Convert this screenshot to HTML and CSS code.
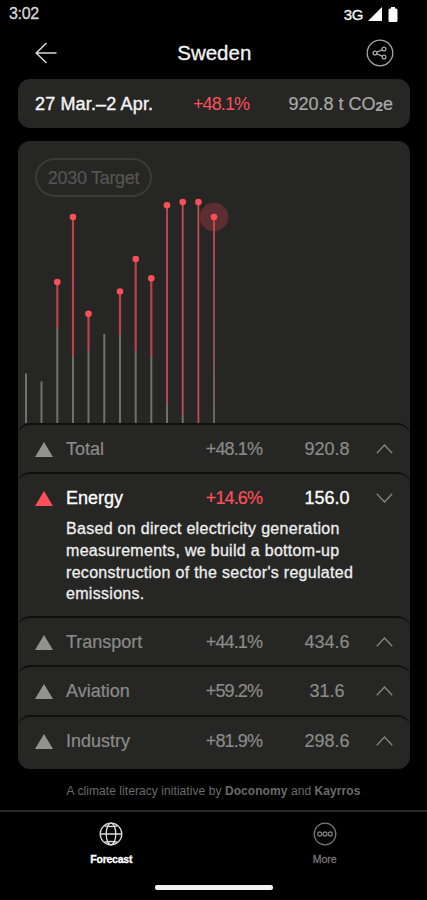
FILE: index.html
```
<!DOCTYPE html>
<html lang="en">
<head>
	<meta charset="UTF-8">
	<title>Sweden</title>
	<link rel="stylesheet" href="styles.css">
</head>

<body>

<div class="status">
	<span class="time">3:02</span>
	<span class="network">3G</span>
	<svg class="signal" width="14" height="14" viewBox="0 0 14 14"><path d="M14 0v14H0z"/></svg>
	<svg class="battery" width="10" height="15" viewBox="0 0 10 15"><path d="M3 0h4v1.500h1.200q1.300 0 1.300 1.500v10.500q0 1.500-1.300 1.500h-6.400q-1.300 0-1.300-1.500V3q0-1.500 1.300-1.500H3z"/></svg>
</div>

<header class="header">
	<svg class="back" width="22" height="22" viewBox="0 0 22 22"><path d="M21.500 11H1M11.500 1 1.200 11l10.300 10"/></svg>
	<h1>Sweden</h1>
	<svg class="share" width="28" height="28" viewBox="0 0 28 28">
		<circle cx="14" cy="14" r="12.800"/>
		<circle cx="9" cy="14" r="1.900"/>
		<circle cx="18" cy="10" r="1.900"/>
		<circle cx="18" cy="18" r="1.900"/>
		<path d="M10.800 13.200l5.400-2.400M10.800 14.800l5.400 2.400"/>
	</svg>
</header>

<section class="summary">
	<span class="dates">27 Mar.–2 Apr.</span>
	<span class="change">+48.1%</span>
	<span class="amount">920.8 t CO<span class="sub">2</span>e</span>
</section>

<main class="card">
	<div class="chart">
		<span class="target">2030 Target</span>
		<svg class="bars" width="392" height="282" viewBox="18 141 392 282">
			<defs>
				<linearGradient id="fade" gradientUnits="userSpaceOnUse" x1="0" y1="217" x2="0" y2="423">
					<stop offset="0" stop-color="#dc4b55"/>
					<stop offset=".5" stop-color="#a8585e"/>
					<stop offset="1" stop-color="#777774"/>
				</linearGradient>
			</defs>
			<g class="base">
				<path d="M26 373.500V423M41.500 381.500V423M57.300 328V423M73 356V423M88.500 351V423M104.300 334V423M120 335V423M135.700 351V423M151.300 356V423M167 405V423M182.700 415V423"/>
			</g>
			<g class="over">
				<path d="M57.300 282V328M73 217V356M88.500 314V351M120 291.500V335M135.700 259V351M151.300 278V356"/>
				<path class="thin" d="M167 205V405M182.700 202V415M198.400 202V423"/>
			</g>
			<circle class="halo" cx="214" cy="217" r="14.300"/>
			<path d="M213.200 217h1.600v206h-1.600z" fill="url(#fade)"/>
			<g class="dots">
				<circle cx="57.300" cy="282" r="3.300"/>
				<circle cx="73" cy="217" r="3.300"/>
				<circle cx="88.500" cy="313.800" r="3.300"/>
				<circle cx="120" cy="291.500" r="3.300"/>
				<circle cx="135.700" cy="259" r="3.300"/>
				<circle cx="151.300" cy="278.300" r="3.300"/>
				<circle cx="167" cy="205.300" r="3.300"/>
				<circle cx="182.700" cy="202" r="3.300"/>
				<circle cx="198.400" cy="202" r="3.300"/>
				<circle cx="214" cy="217" r="3.300"/>
			</g>
		</svg>
	</div>

	<div class="row">
		<svg class="triangle" width="18" height="15" viewBox="0 0 18 15"><path d="M9 0l9 15H0z"/></svg>
		<span class="name">Total</span>
		<span class="percent">+48.1%</span>
		<span class="value">920.8</span>
		<svg class="chevron" width="17" height="10" viewBox="0 0 17 10"><path d="M.8 9.200 8.500 1l7.700 8.200"/></svg>
	</div>
	<div class="row open">
		<svg class="triangle" width="18" height="15" viewBox="0 0 18 15"><path d="M9 0l9 15H0z"/></svg>
		<span class="name">Energy</span>
		<span class="percent">+14.6%</span>
		<span class="value">156.0</span>
		<svg class="chevron" width="17" height="10" viewBox="0 0 17 10"><path d="M.8 .8 8.500 9l7.700-8.200"/></svg>
		<p class="about">Based on direct electricity generation<br>measurements, we build a bottom-up<br>reconstruction of the sector's regulated<br>emissions.</p>
	</div>
	<div class="row">
		<svg class="triangle" width="18" height="15" viewBox="0 0 18 15"><path d="M9 0l9 15H0z"/></svg>
		<span class="name">Transport</span>
		<span class="percent">+44.1%</span>
		<span class="value">434.6</span>
		<svg class="chevron" width="17" height="10" viewBox="0 0 17 10"><path d="M.8 9.200 8.500 1l7.700 8.200"/></svg>
	</div>
	<div class="row">
		<svg class="triangle" width="18" height="15" viewBox="0 0 18 15"><path d="M9 0l9 15H0z"/></svg>
		<span class="name">Aviation</span>
		<span class="percent">+59.2%</span>
		<span class="value">31.6</span>
		<svg class="chevron" width="17" height="10" viewBox="0 0 17 10"><path d="M.8 9.200 8.500 1l7.700 8.200"/></svg>
	</div>
	<div class="row">
		<svg class="triangle" width="18" height="15" viewBox="0 0 18 15"><path d="M9 0l9 15H0z"/></svg>
		<span class="name">Industry</span>
		<span class="percent">+81.9%</span>
		<span class="value">298.6</span>
		<svg class="chevron" width="17" height="10" viewBox="0 0 17 10"><path d="M.8 9.200 8.500 1l7.700 8.200"/></svg>
	</div>
</main>

<p class="credit">A climate literacy initiative by <b>Doconomy</b> and <b>Kayrros</b></p>

<nav class="tabs">
	<a class="tab active">
		<svg width="24" height="24" viewBox="0 0 24 24">
			<circle cx="12" cy="12" r="10.800"/>
			<ellipse cx="12" cy="12" rx="4.800" ry="10.800"/>
			<path d="M1.200 12h21.600M5.500 3.800q6.500 1.400 13 0M5.500 20.200q6.500-1.400 13 0"/>
		</svg>
		<span>Forecast</span>
	</a>
	<a class="tab">
		<svg width="24" height="24" viewBox="0 0 24 24">
			<circle cx="12" cy="12" r="10.800"/>
			<circle cx="6.700" cy="12" r="2"/>
			<circle cx="12" cy="12" r="2"/>
			<circle cx="17.300" cy="12" r="2"/>
		</svg>
		<span>More</span>
	</a>
</nav>
<div class="home"></div>

</body>
</html>
```

FILE: styles.css
```
:root {
	--card: #262624;
	--red: #fb4f59;
	--grey: #8b8b89;
}

* {
	box-sizing: border-box;
}

body {
	margin: 0;
	height: 900px;
	overflow: hidden;
	background: #000;
	color: #f4f4f4;
	font-family: "Liberation Sans", Arial, sans-serif;
	font-size: 18px;
	display: flex;
	flex-direction: column;
}

svg {
	display: block;
	flex: none;
}

.status {
	display: flex;
	align-items: center;
	height: 28px;
	padding: 0 29px 0 9px;
	font-size: 16px;
	-webkit-text-stroke: .3px;
}

.time {
	color: #d8d8d8;
	letter-spacing: -.3px;
}

.network {
	margin-left: auto;
	font-size: 15px;
	letter-spacing: -.4px;
}

.status svg {
	fill: #fff;
}

.signal {
	margin-left: 5px;
}

.battery {
	margin-left: 6px;
}

.header {
	display: flex;
	align-items: center;
	justify-content: space-between;
	height: 51px;
	padding: 0 33.5px 1px 35px;
}

.header h1 {
	margin: 0;
	font-size: 20.5px;
	font-weight: normal;
	padding-left: 6px;
	-webkit-text-stroke: .3px;
}

.header svg {
	fill: none;
	stroke: #d8d8d8;
	stroke-width: 1.5;
}

.header .share {
	stroke: #a6a6a6;
	stroke-width: 1.3;
}

.summary {
	display: flex;
	align-items: center;
	height: 49px;
	margin: 0 17px 13px 18px;
	padding: 2px 17px 0;
	background: var(--card);
	border-radius: 12px;
}

.dates {
	width: 158px;
	letter-spacing: .15px;
	-webkit-text-stroke: .4px;
}

.change {
	color: var(--red);
	letter-spacing: -.9px;
}

.amount {
	margin-left: auto;
	color: #a9a9a7;
	-webkit-text-stroke: .2px;
}

.sub {
	font-size: 13.5px;
	font-weight: bold;
	position: relative;
	top: 1px;
}

.card {
	margin: 0 17px 0 18px;
	background: var(--card);
	border-radius: 12px;
	overflow: hidden;
}

.chart {
	position: relative;
	height: 282px;
}

.target {
	position: absolute;
	left: 17px;
	top: 17px;
	width: 117px;
	height: 39px;
	border: 2px solid #3a3a38;
	border-radius: 20px;
	color: #555553;
	line-height: 36px;
	letter-spacing: -.3px;
	text-align: center;
	white-space: nowrap;
	-webkit-text-stroke: .2px;
}

.base path {
	stroke: #70706d;
	stroke-width: 2;
}

.over path {
	stroke: #b8434a;
	stroke-width: 2.2;
}

.over .thin {
	stroke: #c9505a;
	stroke-width: 1.7;
}

.dots {
	fill: var(--red);
}

.halo {
	fill: #5c2e31;
}

/* each row is drawn as a sheet tucked under the one above */
.row {
	display: grid;
	grid-template-columns: 30px 112px 85px 90px 1fr;
	align-items: center;
	min-height: 49.2px;
	padding: 1px 17px 0;
	border-top: 2px solid #10100f;
	border-radius: 12px 12px 0 0;
	color: var(--grey);
}

.row:last-child {
	min-height: 54px;
	padding-bottom: 4px;
}

.triangle {
	fill: #929290;
}

.name,
.percent,
.value {
	padding-top: 1px;
	-webkit-text-stroke: .2px;
}

.name {
	padding-left: 1px;
}

.percent {
	text-align: right;
	letter-spacing: -.9px;
}

.value {
	text-align: center;
	padding-left: 40px;
}

.chevron {
	justify-self: end;
	fill: none;
	stroke: #858583;
	stroke-width: 1.3;
}

.open {
	grid-template-rows: 46px auto;
	height: 144px;
	align-content: start;
	color: #fff;
}

.open .name,
.open .value {
	-webkit-text-stroke: .3px;
}

.open .triangle {
	fill: var(--red);
}

.open .percent {
	color: var(--red);
}

.about {
	grid-column: 2 / -1;
	margin: -3px 0 0 1px;
	font-size: 16px;
	line-height: 21.7px;
	letter-spacing: .3px;
	color: #eee;
	white-space: nowrap;
	-webkit-text-stroke: .3px;
}

.credit {
	margin: 15px 0 12px;
	text-align: center;
	font-size: 12px;
	line-height: 14px;
	letter-spacing: .07px;
	color: #6b6b6b;
}

.tabs {
	display: flex;
	height: 75px;
	border-top: 2px solid #272727;
}

.tab {
	flex: 1;
	display: flex;
	flex-direction: column;
	align-items: center;
	padding: 10px 0 0 9px;
	font-size: 10.5px;
	line-height: 12px;
	color: #777;
	-webkit-text-stroke: .3px;
}

.tab span {
	margin-top: 7px;
}

.tab svg {
	fill: none;
	stroke: #777;
	stroke-width: 1.3;
}

.active {
	color: #fff;
	font-weight: bold;
	letter-spacing: -.25px;
}

.active svg {
	stroke: #ddd;
}

.home {
	width: 118px;
	height: 5px;
	margin: 0 auto;
	border-radius: 2px;
	background: #f2f2f2;
}
```
